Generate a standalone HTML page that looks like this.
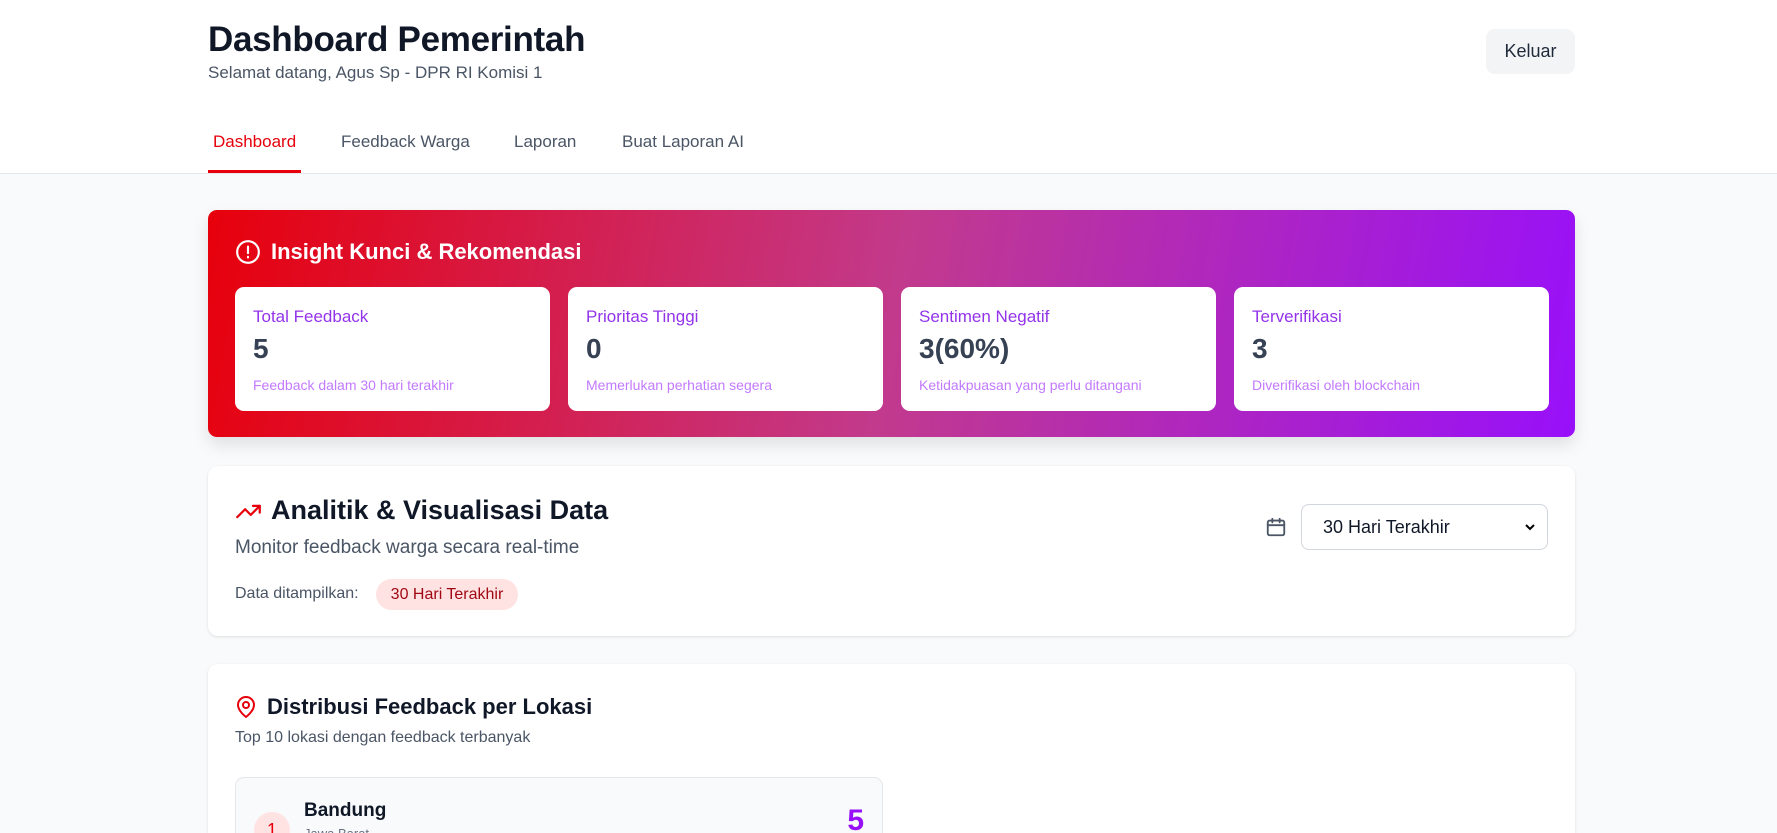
<!DOCTYPE html>
<html style="width:1777px;height:833px;overflow:hidden"><head><meta charset="utf-8"><style>
*{box-sizing:border-box;margin:0;padding:0}
body{width:1777px;height:833px;overflow:hidden;background:#f9fafb;font-family:"Liberation Sans",sans-serif;color:#101828;position:relative}
.abs{position:absolute}
header{position:absolute;left:0;top:0;width:1777px;height:174px;background:#fff;border-bottom:1px solid #e5e7eb}
.card{position:absolute;background:#fff;border-radius:10px;box-shadow:0 1px 3px rgba(0,0,0,.08),0 1px 2px rgba(0,0,0,.04)}
.ic{position:absolute;background:#fff;border-radius:9px;width:315px;height:124px;top:287px}
.ic .l{position:absolute;left:18px;top:20px;font-size:17px;color:#9333ea}
.ic .v{position:absolute;left:18px;top:46px;font-size:28px;font-weight:bold;color:#364153}
.ic .s{position:absolute;left:18px;top:90px;font-size:14px;color:#c27aff}
</style></head><body>
<header>
<div class="abs" style="left:208px;top:20px;font-size:35px;font-weight:bold;color:#101828;letter-spacing:-0.3px">Dashboard Pemerintah</div>
<div class="abs" style="left:208px;top:63px;font-size:17px;color:#4a5565">Selamat datang, Agus Sp - DPR RI Komisi 1</div>
<div class="abs" style="left:1486px;top:29px;width:89px;height:45px;background:#f3f4f6;border-radius:9px;font-size:18px;color:#1e2939;text-align:center;line-height:45px">Keluar</div>
<div class="abs" style="left:213px;top:132px;font-size:17px;color:#e7000b">Dashboard</div>
<div class="abs" style="left:341px;top:132px;font-size:17px;color:#4a5565">Feedback Warga</div>
<div class="abs" style="left:514px;top:132px;font-size:17px;color:#4a5565">Laporan</div>
<div class="abs" style="left:622px;top:132px;font-size:17px;color:#4a5565">Buat Laporan AI</div>
<div class="abs" style="left:208px;top:170px;width:93px;height:3px;background:#e7000b"></div>
</header>

<div class="abs" style="left:208px;top:210px;width:1367px;height:227px;border-radius:9px;background:linear-gradient(100deg,#e7000b 0%,#c23a8c 50%,#9810fa 100%);box-shadow:0 8px 16px rgba(0,0,0,.1)">
<svg class="abs" style="left:27px;top:29px" width="26" height="26" viewBox="0 0 24 24" fill="none" stroke="#fff" stroke-width="2" stroke-linecap="round"><circle cx="12" cy="12" r="10"/><path d="M12 7v6M12 16.5v.5"/></svg>
<div class="abs" style="left:63px;top:29px;font-size:22px;font-weight:bold;color:#fff">Insight Kunci &amp; Rekomendasi</div>
</div>
<div class="ic" style="left:235px"><div class="l">Total Feedback</div><div class="v">5</div><div class="s">Feedback dalam 30 hari terakhir</div></div>
<div class="ic" style="left:568px"><div class="l">Prioritas Tinggi</div><div class="v">0</div><div class="s">Memerlukan perhatian segera</div></div>
<div class="ic" style="left:901px"><div class="l">Sentimen Negatif</div><div class="v">3(60%)</div><div class="s">Ketidakpuasan yang perlu ditangani</div></div>
<div class="ic" style="left:1234px"><div class="l">Terverifikasi</div><div class="v">3</div><div class="s">Diverifikasi oleh blockchain</div></div>

<div class="card" style="left:208px;top:466px;width:1367px;height:170px">
<svg class="abs" style="left:27px;top:32px" width="27" height="27" viewBox="0 0 24 24" fill="none" stroke="#e7000b" stroke-width="2" stroke-linecap="round" stroke-linejoin="round"><path d="M2 17l7-7 5 5 8-8"/><path d="M16 7h6v6"/></svg>
<div class="abs" style="left:63px;top:29px;font-size:27px;font-weight:bold;color:#101828">Analitik &amp; Visualisasi Data</div>
<div class="abs" style="left:27px;top:71px;font-size:19px;color:#4a5565">Monitor feedback warga secara real-time</div>
<div class="abs" style="left:27px;top:119px;font-size:16px;color:#4a5565">Data ditampilkan:</div>
<div class="abs" style="left:168px;top:113px;width:142px;height:31px;border-radius:16px;background:#ffe2e2;color:#9f0712;font-size:16px;text-align:center;line-height:31px">30 Hari Terakhir</div>
<svg class="abs" style="left:1057px;top:50px" width="22" height="22" viewBox="0 0 24 24" fill="none" stroke="#4a5565" stroke-width="2" stroke-linecap="round"><rect x="3" y="5" width="18" height="16" rx="2"/><path d="M8 3v4M16 3v4M3 10h18"/></svg>
<div class="abs" style="left:1093px;top:38px;width:247px;height:46px;border:1px solid #d1d5dc;border-radius:8px;font-size:18px;color:#101828;line-height:44px;padding-left:21px">30 Hari Terakhir
<svg class="abs" style="right:12px;top:18px" width="10" height="8" viewBox="0 0 10 8"><path d="M1 2l4 4 4-4" fill="none" stroke="#000" stroke-width="2"/></svg></div>
</div>

<div class="card" style="left:208px;top:664px;width:1367px;height:169px;border-bottom-left-radius:0;border-bottom-right-radius:0;overflow:hidden">
<svg class="abs" style="left:26px;top:31px" width="24" height="24" viewBox="0 0 24 24" fill="none" stroke="#e7000b" stroke-width="2" stroke-linecap="round" stroke-linejoin="round"><path d="M20 10c0 6-8 12-8 12s-8-6-8-12a8 8 0 0 1 16 0z"/><circle cx="12" cy="10" r="3"/></svg>
<div class="abs" style="left:59px;top:30px;font-size:22px;font-weight:bold;color:#101828">Distribusi Feedback per Lokasi</div>
<div class="abs" style="left:27px;top:65px;font-size:16px;color:#4a5565">Top 10 lokasi dengan feedback terbanyak</div>
<div class="abs" style="left:27px;top:113px;width:648px;height:140px;background:#f9fafb;border:1px solid #e5e7eb;border-radius:9px">
<div class="abs" style="left:18px;top:34px;width:36px;height:36px;border-radius:50%;background:#ffe2e2;color:#e7000b;font-size:18px;text-align:center;line-height:36px">1</div>
<div class="abs" style="left:68px;top:22px;font-size:19px;font-weight:bold;color:#101828">Bandung</div>
<div class="abs" style="left:68px;top:48px;font-size:13px;color:#6a7282">Jawa Barat</div>
<div class="abs" style="right:18px;top:26px;font-size:30px;font-weight:bold;color:#9810fa">5</div>
</div>
</div>
</body></html>
